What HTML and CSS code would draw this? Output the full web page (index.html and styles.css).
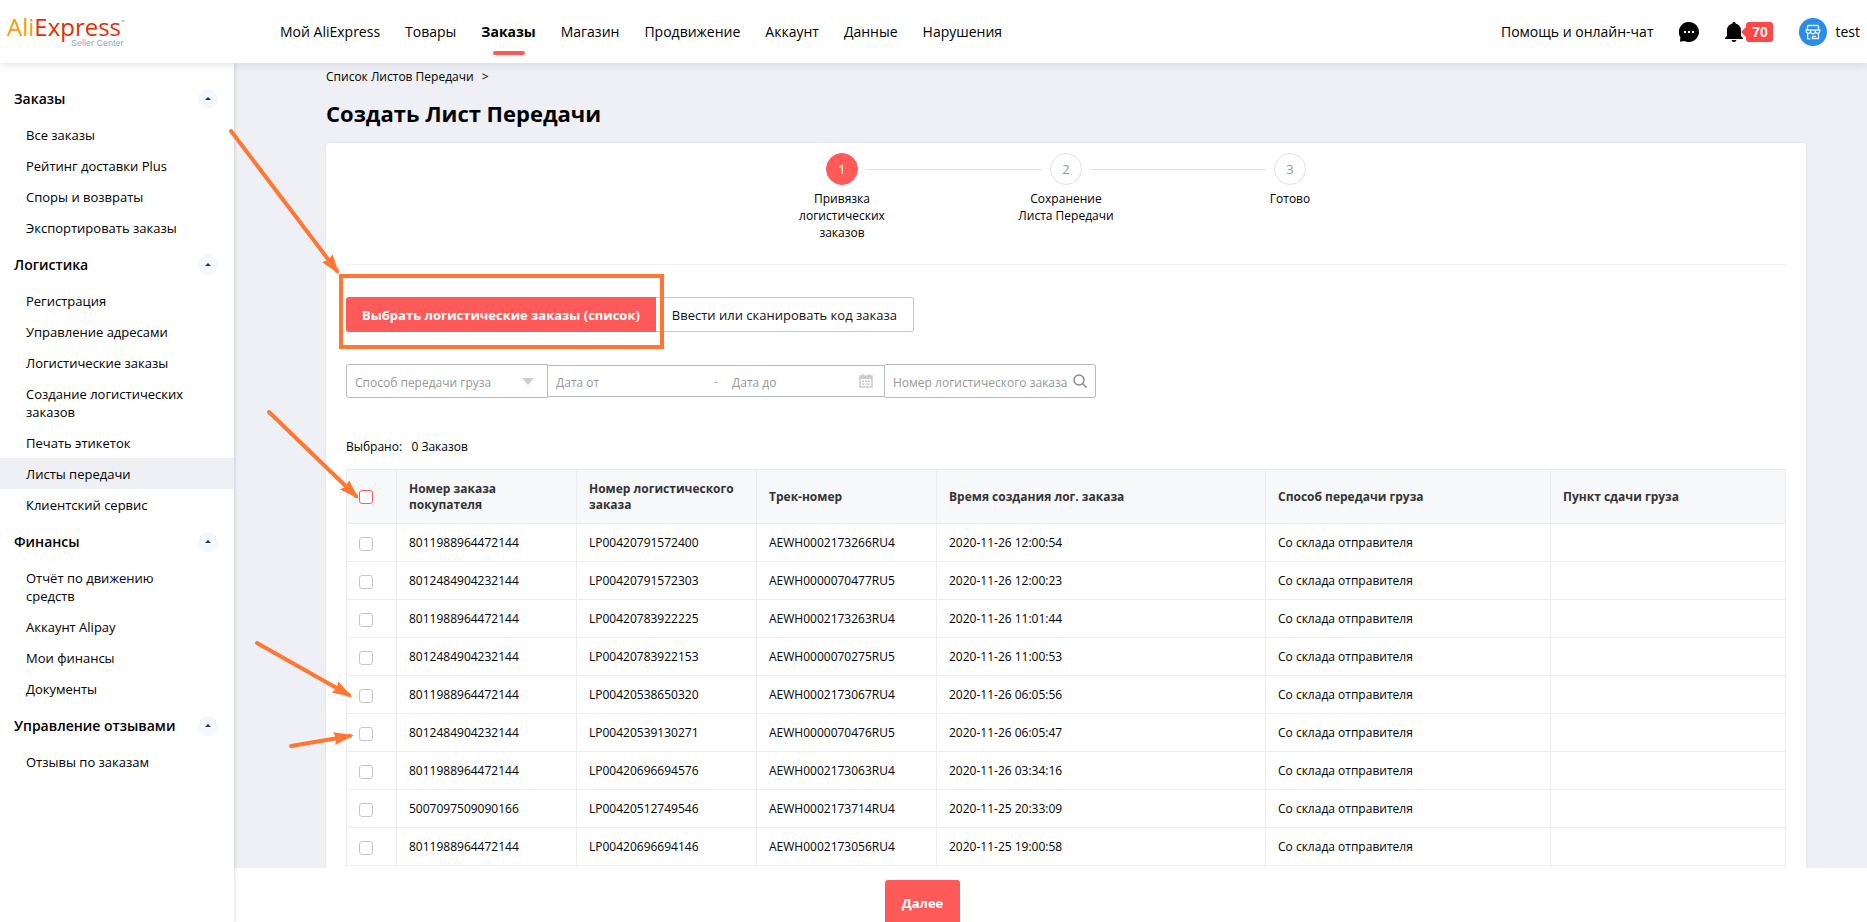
FILE: index.html
```html
<!DOCTYPE html>
<html lang="ru">
<head>
<meta charset="utf-8">
<title>Создать Лист Передачи</title>
<link rel="stylesheet" href="styles.css">
</head>
<body>
<header class="header">
  <a class="logo" href="#" aria-label="AliExpress Seller Center">
    <span class="logo-name"><span class="logo-ali">Ali</span>Express<sup class="logo-tm">™</sup></span>
    <span class="logo-sub">Seller Center</span>
  </a>
  <nav class="nav">
    <a href="#">Мой AliExpress</a>
    <a href="#">Товары</a>
    <a href="#" class="active">Заказы</a>
    <a href="#">Магазин</a>
    <a href="#">Продвижение</a>
    <a href="#">Аккаунт</a>
    <a href="#">Данные</a>
    <a href="#">Нарушения</a>
  </nav>
  <div class="tools">
    <a href="#" class="help">Помощь и онлайн-чат</a>
    <button class="icon-btn chat" aria-label="Чат">
      <svg width="20" height="20" viewBox="0 0 20 20"><path d="M10 0a10 10 0 1 1-4.600 18.900L1 19.700l.4-4.400A10 10 0 0 1 10 0z"/><g fill="#fff"><rect x="5" y="9" width="2" height="2"/><rect x="9" y="9" width="2" height="2"/><rect x="13" y="9" width="2" height="2"/></g></svg>
    </button>
    <button class="icon-btn bell" aria-label="Уведомления">
      <svg width="18" height="20" viewBox="0 0 18 20"><path d="M9 0c1 0 1.600.6 1.600 1.500C14 2.300 16 5 16 8.500V14l2 2v1H0v-1l2-2V8.500C2 5 4 2.300 7.400 1.500 7.400.6 8 0 9 0zM6.500 18h5c-.4 1.300-1.300 2-2.500 2s-2.100-.7-2.500-2z"/></svg>
      <span class="badge">70</span>
    </button>
    <a href="#" class="user">
      <svg width="28" height="28" viewBox="0 0 28 28"><circle cx="14" cy="14" r="14" fill="#2b8de8"/><g fill="none" stroke="#e4f2ff" stroke-width="1.300"><path d="M8.500 12V8.500a1 1 0 0 1 1-1h9a1 1 0 0 1 1 1V12M7.200 12h13.600v1.500a2.300 2.300 0 0 1-4.500 0 2.300 2.300 0 0 1-4.600 0 2.300 2.300 0 0 1-4.500 0zM11.700 12v2M16.300 12v2M8.700 15.800v5h2.800M19.500 15.800v4.700h-6v-2.200h3.500"/></g></svg>
      <span>test</span>
    </a>
  </div>
</header>
<div class="body">
  <aside class="sidebar">
    <section>
      <h2>Заказы<button class="fold" aria-label="Свернуть Заказы"></button></h2>
      <a href="#">Все заказы</a><a href="#">Рейтинг доставки Plus</a><a href="#">Споры и возвраты</a><a href="#">Экспортировать заказы</a>
    </section>
    <section>
      <h2>Логистика<button class="fold" aria-label="Свернуть Логистика"></button></h2>
      <a href="#">Регистрация</a><a href="#">Управление адресами</a><a href="#">Логистические заказы</a><a href="#">Создание логистических заказов</a><a href="#">Печать этикеток</a><a href="#" class="current">Листы передачи</a><a href="#">Клиентский сервис</a>
    </section>
    <section>
      <h2>Финансы<button class="fold" aria-label="Свернуть Финансы"></button></h2>
      <a href="#">Отчёт по движению средств</a><a href="#">Аккаунт Alipay</a><a href="#">Мои финансы</a><a href="#">Документы</a>
    </section>
    <section>
      <h2>Управление отзывами<button class="fold" aria-label="Свернуть Управление отзывами"></button></h2>
      <a href="#">Отзывы по заказам</a>
    </section>
  </aside>
  <div class="page">
    <main class="content">
      <nav class="crumbs"><a href="#">Список Листов Передачи</a><span>&gt;</span></nav>
      <h1>Создать Лист Передачи</h1>
      <div class="card">
        <ol class="steps">
          <li class="step on"><span class="num">1</span><span>Привязка логистических заказов</span></li>
          <li class="line" aria-hidden="true"></li>
          <li class="step"><span class="num">2</span><span>Сохранение<br>Листа Передачи</span></li>
          <li class="line" aria-hidden="true"></li>
          <li class="step"><span class="num">3</span><span>Готово</span></li>
        </ol>
        <div class="modes">
          <button class="mode primary">Выбрать логистические заказы (список)</button><button class="mode">Ввести или сканировать код заказа</button>
        </div>
        <form class="filters">
          <div class="field method">
            <select aria-label="Способ передачи груза"><option>Способ передачи груза</option></select>
            <svg width="12" height="7" viewBox="0 0 12 7"><path d="M0 0h12L6 7z" fill="#ccc"/></svg>
          </div>
          <div class="field dates">
            <input class="from" type="text" placeholder="Дата от" aria-label="Дата от"><span>-</span><input type="text" placeholder="Дата до" aria-label="Дата до">
            <svg width="14" height="14" viewBox="0 0 14 14"><path d="M1 2h12v11H1z" fill="none" stroke="#ccc" stroke-width="1.500"/><path d="M1 2h12v3H1zM3 0h1.500v3H3zM9.500 0H11v3H9.500z" fill="#ccc"/><path d="M3 7.200h8M3 10.200h8" stroke="#ccc" stroke-width="1.500" stroke-dasharray="2 1"/></svg>
          </div>
          <div class="field search">
            <input type="text" placeholder="Номер логистического заказа" aria-label="Номер логистического заказа">
            <button type="button" aria-label="Найти"><svg width="14" height="14" viewBox="0 0 14 14"><g fill="none" stroke="#8c8c8c" stroke-width="1.500"><circle cx="6" cy="6" r="5"/><path d="M9.500 9.500l4 4"/></g></svg></button>
          </div>
        </form>
        <p class="selected">Выбрано:&nbsp;&nbsp; 0 Заказов</p>
        <table class="orders">
          <colgroup><col class="c-check"><col class="c-id"><col class="c-id"><col class="c-id"><col class="c-time"><col class="c-method"><col></colgroup>
          <thead><tr><th><input type="checkbox" class="all" aria-label="Выбрать все"></th><th>Номер заказа покупателя</th><th>Номер логистического заказа</th><th>Трек-номер</th><th>Время создания лог. заказа</th><th>Способ передачи груза</th><th>Пункт сдачи груза</th></tr></thead>
          <tbody>
            <tr><td><input type="checkbox" aria-label="LP00420791572400"></td><td>8011988964472144</td><td>LP00420791572400</td><td>AEWH0002173266RU4</td><td>2020-11-26 12:00:54</td><td>Со склада отправителя</td><td></td></tr>
            <tr><td><input type="checkbox" aria-label="LP00420791572303"></td><td>8012484904232144</td><td>LP00420791572303</td><td>AEWH0000070477RU5</td><td>2020-11-26 12:00:23</td><td>Со склада отправителя</td><td></td></tr>
            <tr><td><input type="checkbox" aria-label="LP00420783922225"></td><td>8011988964472144</td><td>LP00420783922225</td><td>AEWH0002173263RU4</td><td>2020-11-26 11:01:44</td><td>Со склада отправителя</td><td></td></tr>
            <tr><td><input type="checkbox" aria-label="LP00420783922153"></td><td>8012484904232144</td><td>LP00420783922153</td><td>AEWH0000070275RU5</td><td>2020-11-26 11:00:53</td><td>Со склада отправителя</td><td></td></tr>
            <tr><td><input type="checkbox" aria-label="LP00420538650320"></td><td>8011988964472144</td><td>LP00420538650320</td><td>AEWH0002173067RU4</td><td>2020-11-26 06:05:56</td><td>Со склада отправителя</td><td></td></tr>
            <tr><td><input type="checkbox" aria-label="LP00420539130271"></td><td>8012484904232144</td><td>LP00420539130271</td><td>AEWH0000070476RU5</td><td>2020-11-26 06:05:47</td><td>Со склада отправителя</td><td></td></tr>
            <tr><td><input type="checkbox" aria-label="LP00420696694576"></td><td>8011988964472144</td><td>LP00420696694576</td><td>AEWH0002173063RU4</td><td>2020-11-26 03:34:16</td><td>Со склада отправителя</td><td></td></tr>
            <tr><td><input type="checkbox" aria-label="LP00420512749546"></td><td>5007097509090166</td><td>LP00420512749546</td><td>AEWH0002173714RU4</td><td>2020-11-25 20:33:09</td><td>Со склада отправителя</td><td></td></tr>
            <tr><td><input type="checkbox" aria-label="LP00420696694146"></td><td>8011988964472144</td><td>LP00420696694146</td><td>AEWH0002173056RU4</td><td>2020-11-25 19:00:58</td><td>Со склада отправителя</td><td></td></tr>
            <tr><td></td><td></td><td></td><td></td><td></td><td></td><td></td></tr>
          </tbody>
        </table>
      </div>
    </main>
    <footer class="footer"><button class="next">Далее</button></footer>
  </div>
</div>
<svg class="notes" aria-hidden="true">
  <defs><marker id="head" markerUnits="userSpaceOnUse" markerWidth="20" markerHeight="14" refX="16" refY="7" orient="auto"><path d="M0 0.500L20 7 0 13.500 2 7z" fill="#ff7733"/></marker></defs>
  <g fill="none" stroke="#ff7733" stroke-width="4" stroke-linecap="round">
    <rect x="341" y="276" width="321" height="71" stroke-linecap="butt"/>
    <path d="M231 131L337 271" marker-end="url(#head)"/>
    <path d="M269 412L356 496" marker-end="url(#head)"/>
    <path d="M257 643L349 695" marker-end="url(#head)"/>
    <path d="M291 746L350 736" marker-end="url(#head)"/>
  </g>
</svg>
</body>
</html>
```
FILE: styles.css
```css
* { box-sizing: border-box; }
body {
  margin: 0;
  height: 100vh;
  display: flex;
  flex-direction: column;
  overflow: hidden;
  position: relative;
  background: #eff0f5;
  color: #000;
  font-family: "Open Sans", "Noto Sans", sans-serif;
  font-size: 12px;
}
a { color: inherit; text-decoration: none; }
button, input, select { font-family: inherit; font-size: inherit; }
button { padding: 0; border: 0; background: none; cursor: pointer; }

/* header */
.header {
  flex: none;
  height: 63px;
  display: flex;
  align-items: center;
  padding: 0 7px;
  background: #fff;
  box-shadow: 0 2px 8px rgba(40, 50, 100, .12);
  position: relative;
  z-index: 2;
  font-size: 14px;
}
.logo { width: 273px; display: flex; flex-direction: column; }
.logo-name { color: #e62e04; font-size: 24px; line-height: 24px; font-weight: 500; }
.logo-ali { color: #ff9a00; }
.logo-tm { font-size: 5px; color: #888; vertical-align: 12px; line-height: 0; }
.logo-sub {
  margin: -1px 0 0 64px;
  color: #9aa5b5;
  font: 9px/10px "Liberation Sans", sans-serif;
}
.nav { display: flex; gap: 25px; }
.nav a { line-height: 63px; position: relative; white-space: nowrap; }
.nav .active { font-weight: 700; }
.nav .active::after {
  content: "";
  position: absolute;
  left: calc(50% - 16px);
  bottom: 8px;
  width: 32px;
  height: 4px;
  border-radius: 2px;
  background: #ff5a5a;
}
.tools { margin-left: auto; display: flex; align-items: center; gap: 26px; }
.icon-btn { display: flex; align-items: center; }
.icon-btn svg { display: block; }
.badge {
  position: relative;
  width: 27px;
  margin-left: 3px;
  border-radius: 3px;
  background: #ff4747;
  color: #fff;
  font: 700 14px/20px "Liberation Sans", sans-serif;
}
.badge::before {
  content: "";
  position: absolute;
  left: -5px;
  top: 5px;
  border: 5px solid transparent;
  border-left-width: 0;
  border-right-color: #ff4747;
}
.user { display: flex; align-items: center; gap: 8px; }

.body { flex: 1; display: flex; min-height: 0; }

/* sidebar */
.sidebar {
  flex: none;
  width: 234px;
  padding-top: 15px;
  background: #fff;
  box-shadow: 1px 0 3px rgba(40, 50, 80, .16);
  position: relative;
  z-index: 1;
  font-size: 13px;
}
.sidebar section { margin-bottom: 1px; }
.sidebar h2 {
  display: flex;
  align-items: center;
  justify-content: space-between;
  height: 41px;
  margin: 0;
  padding: 0 16px 0 14px;
  font-size: 14px;
  font-weight: 600;
}
.fold {
  width: 20px;
  height: 20px;
  border-radius: 50%;
  background: #f3f7fe;
  display: grid;
  place-items: center;
}
.fold::before {
  content: "";
  border: 3px solid transparent;
  border-top-width: 0;
  border-bottom-color: #333;
}
.sidebar a { display: block; padding: 7px 48px 6px 26px; line-height: 18px; }
.sidebar .current { background: #eff0f5; }

/* page */
.page { flex: 1; min-width: 0; display: flex; flex-direction: column; }
.content { flex: 1; min-height: 0; overflow: hidden; padding: 4px 61px 0 92px; }
.crumbs { display: flex; gap: 8px; font-size: 12px; line-height: 20px; }
h1 { margin: 8px 0 12px; font-size: 22px; line-height: 36px; }
.card {
  padding: 10px 20px;
  background: #fff;
  border-radius: 4px;
  box-shadow: 0 0 2px rgba(40, 50, 80, .12);
}
.steps {
  display: flex;
  justify-content: center;
  height: 112px;
  margin: 0 0 32px;
  padding: 0;
  list-style: none;
  border-bottom: 1px solid #f0f0f2;
}
.step {
  width: 104px;
  display: flex;
  flex-direction: column;
  align-items: center;
  gap: 5px;
  text-align: center;
  line-height: 17px;
}
.num {
  width: 32px;
  border: 1px solid #e2e2e4;
  border-radius: 50%;
  color: #999;
  font-size: 13px;
  line-height: 30px;
}
.on .num { border-color: #ff5a5a; background: #ff5a5a; color: #fff; }
.line { width: 176px; height: 1px; margin: 16px -28px 0; background: #e2e2e4; }

.modes { display: flex; }
.mode {
  height: 35px;
  padding: 0 16px;
  border: 1px solid #c4c6cf;
  border-left: 0;
  border-radius: 0 3px 3px 0;
  background: #fff;
  color: #111;
  font-size: 13px;
}
.mode.primary {
  border: 0;
  border-radius: 3px 0 0 3px;
  background: #ff5a5a;
  color: #fff;
  font-weight: 700;
}

.filters { display: flex; align-items: center; height: 34px; margin: 32px 0 39px; }
.field { display: flex; align-items: center; height: 34px; border: 1px solid #b7bbc6; background: #fff; }
.field svg { flex: none; display: block; }
.field input, .field select {
  min-width: 0;
  padding: 2px 0 0;
  border: 0;
  outline: 0;
  background: none;
  color: #999;
  appearance: none;
}
.field input::placeholder { color: #999; opacity: 1; }
.method { width: 202px; padding: 0 13px 0 8px; border-radius: 3px 0 0 3px; }
.method select { flex: 1; }
.dates { width: 337px; height: 32px; padding: 0 11px 0 8px; border-left: 0; color: #aaa; }
.dates input { flex: 1; }
.dates .from { flex: none; width: 158px; }
.dates span { width: 18px; }
.search { width: 211px; padding: 0 8px; gap: 6px; border-left: 0; border-radius: 0 3px 3px 0; }
.search input { flex: 1; }

.selected { margin: 0 0 12px; line-height: 20px; }

/* orders table */
.orders { width: 100%; table-layout: fixed; border-collapse: collapse; }
.orders th, .orders td { padding: 0 12px; border: 1px solid #ededf0; text-align: left; height: 38px; }
.orders th { height: 54px; background: #f7f8fa; color: #333; font-weight: 700; line-height: 16px; }
.c-check { width: 50px; }
.c-id { width: 180px; }
.c-time { width: 329px; }
.c-method { width: 285px; }
.orders input {
  appearance: none;
  display: block;
  width: 14px;
  height: 14px;
  margin: 2px 0 0;
  border: 1px solid #c4c6cf;
  border-radius: 3px;
  background: #fff;
}
.orders .all { border-color: #ff5a5a; margin: 0; }

.footer {
  flex: none;
  height: 54px;
  padding-top: 12px;
  overflow: hidden;
  background: #fff;
  text-align: center;
}
.next {
  height: 46px;
  padding: 0 17px;
  margin-right: 256px;
  border-radius: 3px;
  background: #ff5a5a;
  color: #fff;
  font-size: 13px;
  font-weight: 700;
}

/* annotation layer */
.notes { position: absolute; inset: 0; width: 100%; height: 100%; z-index: 3; pointer-events: none; }
```
